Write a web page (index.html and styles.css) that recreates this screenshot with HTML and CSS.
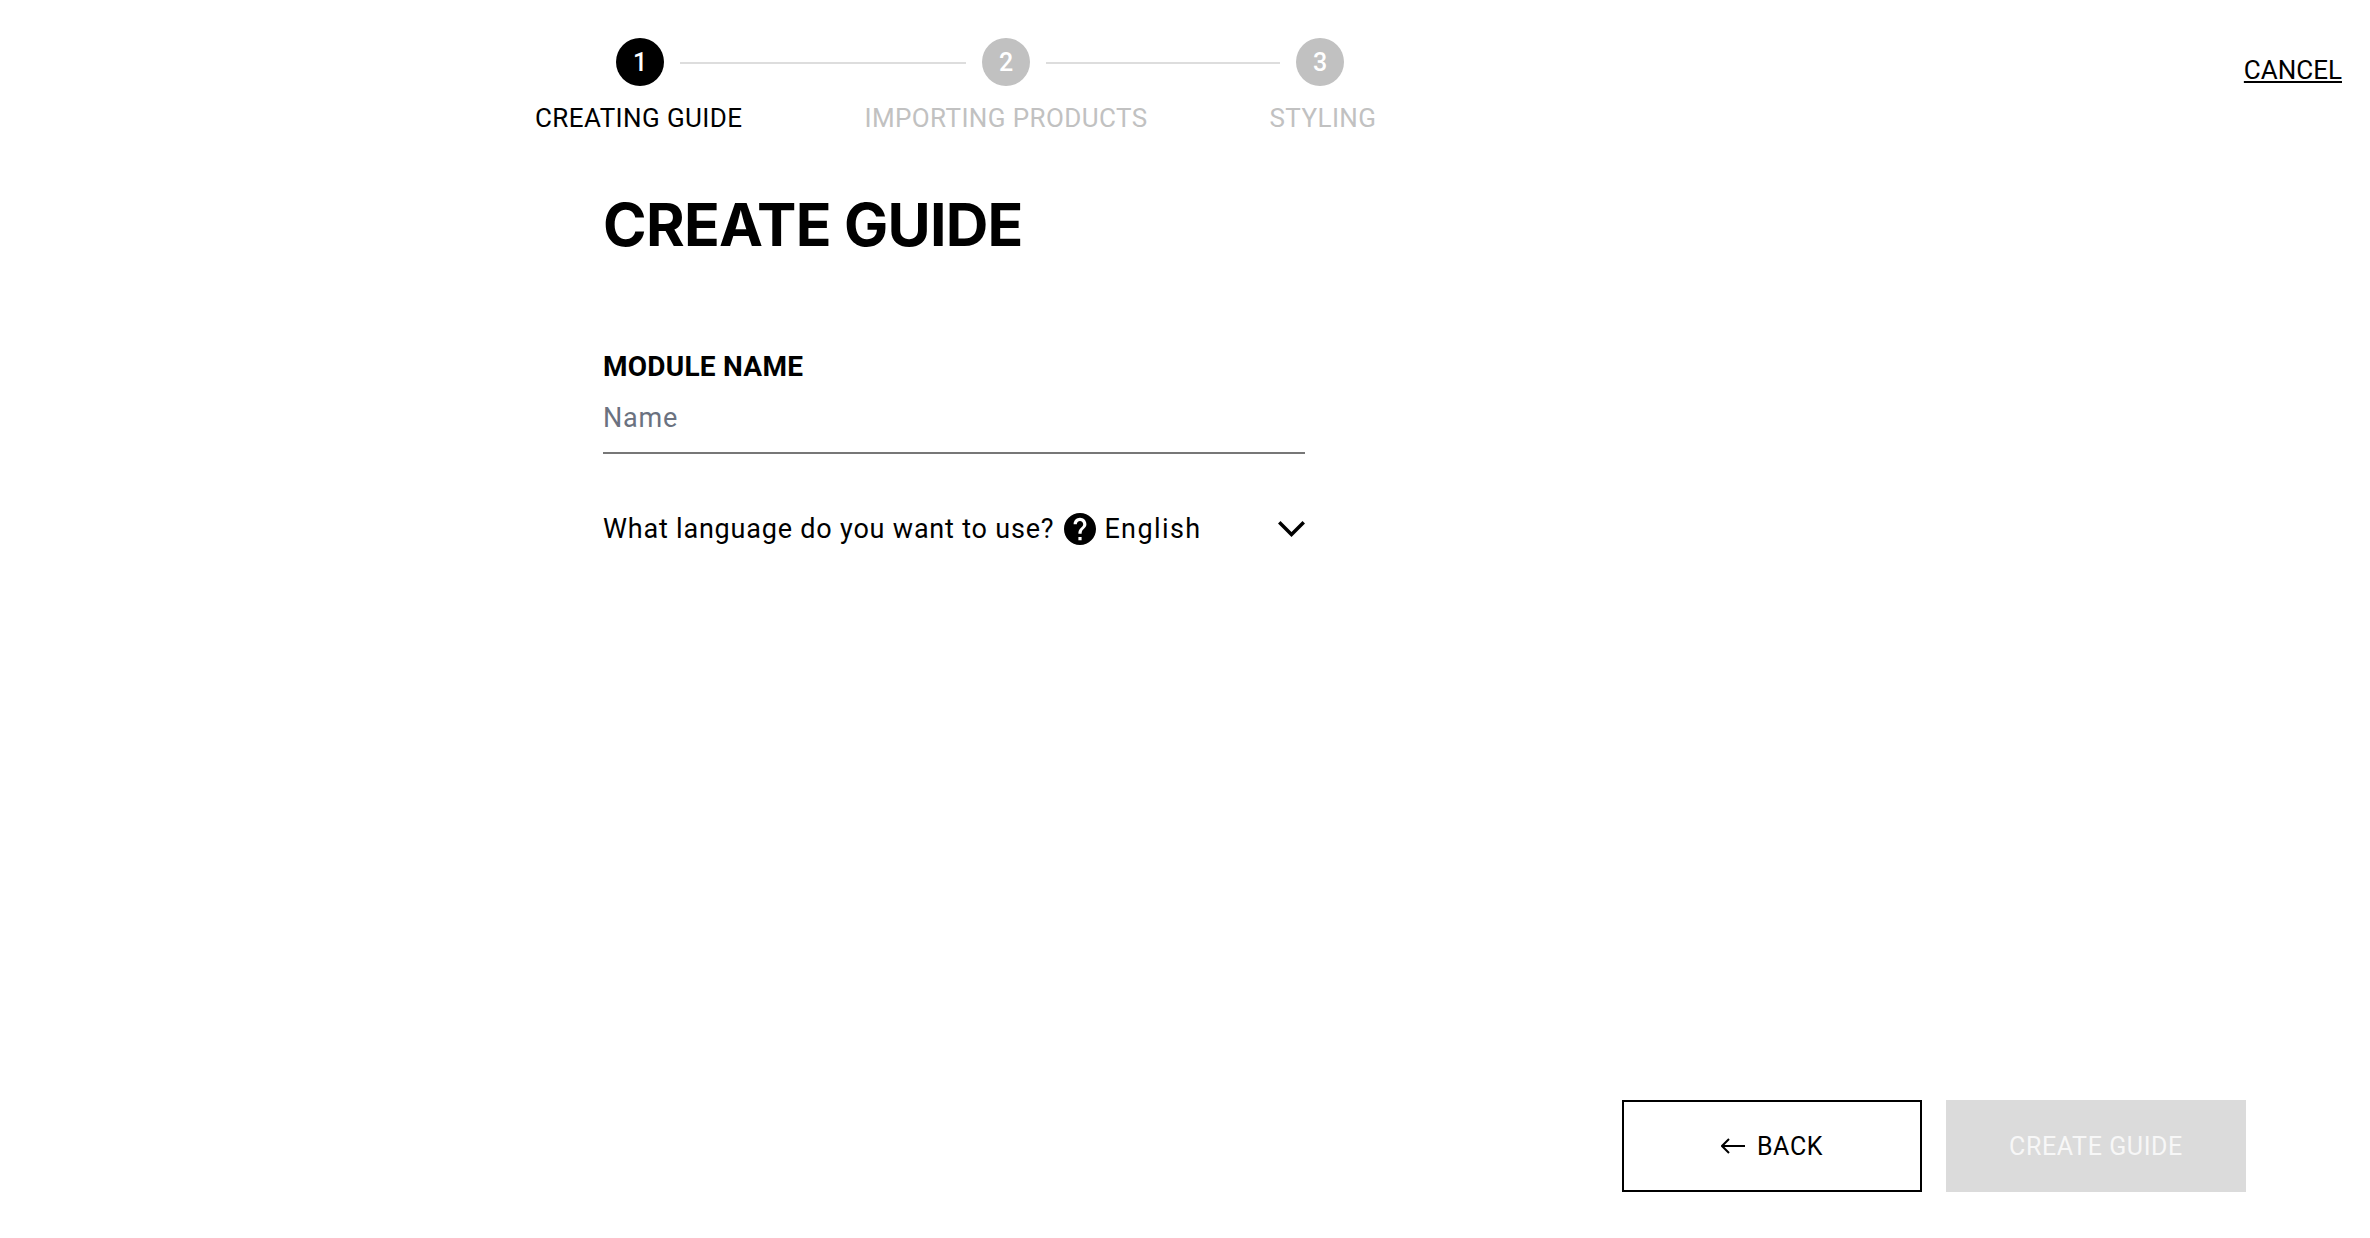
FILE: index.html
```html
<!DOCTYPE html>
<html lang="en">
<head>
  <meta charset="UTF-8" />
  <title>Create Guide</title>
  <link rel="stylesheet" href="styles.css">
</head>
<body>
  <div class="page">
    <header class="topbar">
      <div class="stepper">
        <div class="step-track">
          <div class="step-dot active">1</div>
          <div class="step-line first"></div>
          <div class="step-dot">2</div>
          <div class="step-line second"></div>
          <div class="step-dot">3</div>
        </div>
        <div class="step-labels">
          <div class="step-label active">CREATING GUIDE</div>
          <div class="step-label">IMPORTING PRODUCTS</div>
          <div class="step-label">STYLING</div>
        </div>
      </div>
      <a class="cancel" href="#">CANCEL</a>
    </header>

    <main class="content">
      <h1>CREATE GUIDE</h1>

      <label class="field-label" for="module-name">MODULE NAME</label>
      <input class="field-input" id="module-name" type="text" placeholder="Name" />

      <div class="language-row">
        <span class="language-question">What language do you want to use?</span>
        <svg class="help-icon" viewBox="2 2 20 20"><path d="M12 2C6.48 2 2 6.48 2 12s4.48 10 10 10 10-4.48 10-10S17.52 2 12 2zm1 17h-2v-2h2v2zm2.07-7.75l-.9.92C13.45 12.9 13 13.5 13 15h-2v-.5c0-1.1.45-2.1 1.17-2.83l1.24-1.26c.37-.36.59-.86.59-1.41 0-1.1-.9-2-2-2s-2 .9-2 2H8c0-2.21 1.79-4 4-4s4 1.79 4 4c0 .88-.36 1.68-.93 2.25z"/></svg>
        <span class="language-value">English</span>
        <svg class="chevron" viewBox="0 0 27 16"><path d="M2.5 2.5 L13.5 13.5 L24.5 2.5" /></svg>
      </div>
    </main>

    <footer class="actions">
      <button class="btn btn-back">
        <svg class="arrow" viewBox="0 0 24 16"><path d="M8 1 L1 8 L8 15 M1 8 H24" /></svg>
        BACK
      </button>
      <button class="btn btn-create" disabled>CREATE GUIDE</button>
    </footer>
  </div>
</body>
</html>
```

FILE: styles.css
```css
* { box-sizing: border-box; }

body {
  margin: 0;
  background: #fff;
  color: #000;
  font-family: 'Roboto', 'Liberation Sans', sans-serif;
}

.page {
  height: 1238px;
  display: flex;
  flex-direction: column;
}

.topbar {
  display: flex;
  justify-content: space-between;
  align-items: flex-start;
  padding: 38px 28px 0 535px;
}

.step-track {
  display: flex;
  align-items: center;
  margin-left: 81px;
}

.step-dot {
  width: 48px;
  height: 48px;
  border-radius: 50%;
  background: #c1c1c1;
  color: #fff;
  font-size: 25px;
  font-weight: 500;
  display: flex;
  align-items: center;
  justify-content: center;
}
.step-dot.active { background: #000; }

.step-line {
  height: 2px;
  margin: 2px 16px 0;
  background: #ddd;
}
.step-line.first { width: 286px; }
.step-line.second { width: 234px; }

.step-labels {
  display: flex;
  gap: 122px;
  margin-top: 16px;
}

.step-label {
  font-size: 26px;
  line-height: 32px;
  color: #c1c1c1;
  letter-spacing: 0.4px;
  white-space: nowrap;
}
.step-label.active { color: #000; }

.cancel {
  margin-top: 17px;
  font-size: 26px;
  line-height: 30px;
  color: #000;
}

.content {
  margin-left: 603px;
  width: 702px;
}

h1 {
  margin: 56px 0 0;
  font-family: 'Inter', sans-serif;
  font-size: 59px;
  line-height: 70px;
  font-weight: 700;
  letter-spacing: -0.75px;
}

.field-label {
  display: block;
  margin-top: 90px;
  font-size: 28px;
  line-height: 34px;
  font-weight: 700;
  letter-spacing: 0.25px;
}

.field-input {
  display: block;
  width: 100%;
  height: 70px;
  padding: 0;
  border: 0;
  border-bottom: 2px solid #777;
  outline: none;
  font-family: inherit;
  font-size: 27px;
  letter-spacing: 0.8px;
}
.field-input::placeholder { color: #6b7280; opacity: 1; }

.language-row {
  display: flex;
  align-items: center;
  margin-top: 57px;
  font-size: 27px;
  line-height: 36px;
  letter-spacing: 0.8px;
}

.help-icon {
  width: 32px;
  height: 32px;
  margin-left: 10px;
}

.language-value {
  margin-left: 8px;
  letter-spacing: 1.4px;
}

.chevron {
  width: 27px;
  height: 16px;
  margin-left: auto;
  fill: none;
  stroke: #000;
  stroke-width: 3.5;
  stroke-linecap: square;
}

.actions {
  margin-top: auto;
  display: flex;
  justify-content: flex-end;
  gap: 24px;
  padding: 0 124px 46px 0;
}

.btn {
  width: 300px;
  height: 92px;
  display: flex;
  align-items: center;
  justify-content: center;
  font-family: inherit;
  font-size: 25px;
  letter-spacing: 0.6px;
  border: 0;
  padding: 0;
}

.btn-back {
  border: 2px solid #000;
  background: #fff;
  color: #000;
}

.arrow {
  width: 24px;
  height: 16px;
  margin-right: 12px;
  fill: none;
  stroke: #000;
  stroke-width: 2;
}

.btn-create {
  background: #dbdbdb;
  color: #f7f7f7;
}
```
